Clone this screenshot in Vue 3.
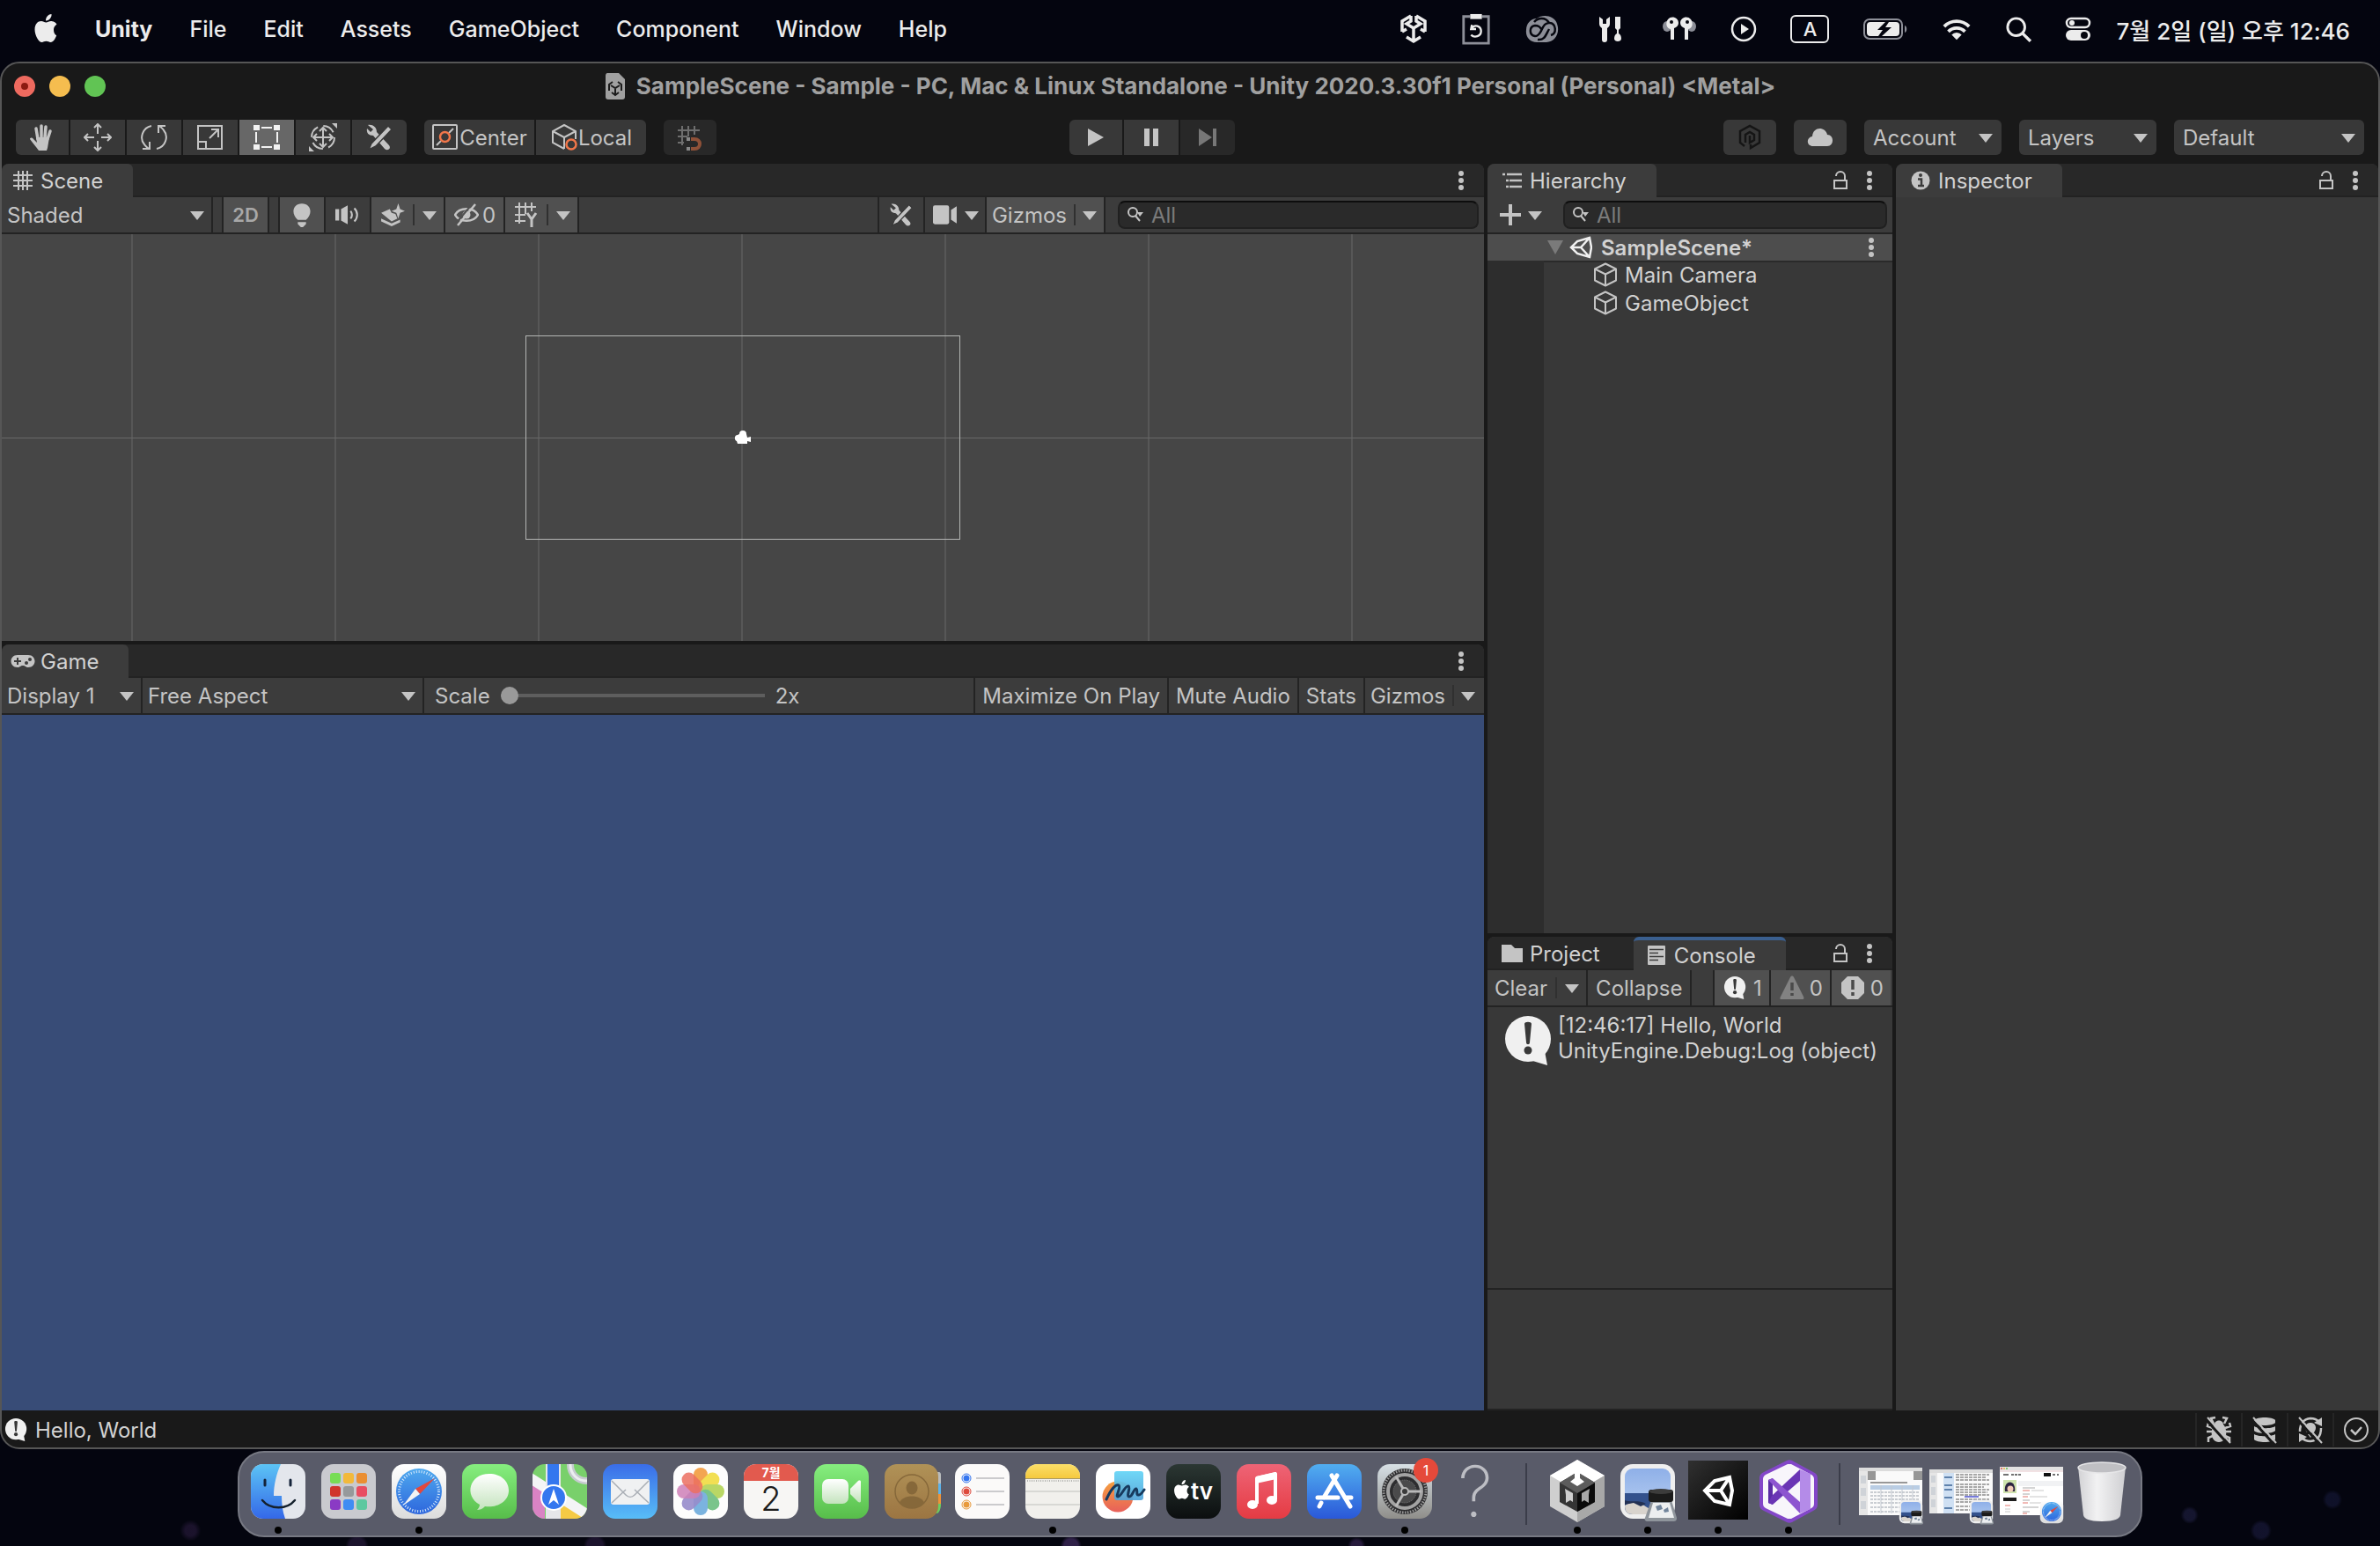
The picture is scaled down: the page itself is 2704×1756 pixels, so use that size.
<template>
  <div class="desktop">
    <!-- Icon sprite -->
    <svg class="sprite" aria-hidden="true">
      <defs>
        <linearGradient id="g-finder" x1="0" y1="0" x2="0" y2="1"><stop offset="0" stop-color="#5cc4f5" /><stop offset="1" stop-color="#3468e8" /></linearGradient>
        <linearGradient id="g-green" x1="0" y1="0" x2="0" y2="1"><stop offset="0" stop-color="#86ee7f" /><stop offset="1" stop-color="#57bd4a" /></linearGradient>
        <linearGradient id="g-mail" x1="0" y1="0" x2="0" y2="1"><stop offset="0" stop-color="#3a6de8" /><stop offset="1" stop-color="#58bdf7" /></linearGradient>
        <linearGradient id="g-store" x1="0" y1="0" x2="0" y2="1"><stop offset="0" stop-color="#51aef0" /><stop offset="1" stop-color="#2a58d8" /></linearGradient>
        <linearGradient id="g-safari" x1="0" y1="0" x2="0" y2="1"><stop offset="0" stop-color="#4fa9ee" /><stop offset="1" stop-color="#2d66dd" /></linearGradient>
        <linearGradient id="g-white" x1="0" y1="0" x2="0" y2="1"><stop offset="0" stop-color="#ffffff" /><stop offset="1" stop-color="#dcdcdc" /></linearGradient>
        <linearGradient id="g-bubble" x1="0" y1="0" x2="0" y2="1"><stop offset="0" stop-color="#ffffff" /><stop offset="1" stop-color="#c4e3bd" /></linearGradient>
        <linearGradient id="g-music" x1="0" y1="0" x2="0" y2="1"><stop offset="0" stop-color="#ee6476" /><stop offset="1" stop-color="#e53b43" /></linearGradient>
        <linearGradient id="g-tv" x1="0" y1="0" x2="0" y2="1"><stop offset="0" stop-color="#2b3733" /><stop offset="1" stop-color="#0b0e0f" /></linearGradient>
        <linearGradient id="g-brown" x1="0" y1="0" x2="0" y2="1"><stop offset="0" stop-color="#b09257" /><stop offset="1" stop-color="#9c7542" /></linearGradient>
        <linearGradient id="g-note" x1="0" y1="0" x2="0" y2="1"><stop offset="0" stop-color="#fbdf69" /><stop offset="1" stop-color="#f5c93e" /></linearGradient>
        <linearGradient id="g-cyan" x1="0" y1="0" x2="0" y2="1"><stop offset="0" stop-color="#63d4f6" /><stop offset="1" stop-color="#4fa3da" /></linearGradient>
        <linearGradient id="g-orange" x1="0" y1="0" x2="0" y2="1"><stop offset="0" stop-color="#f5a03f" /><stop offset="1" stop-color="#e8605a" /></linearGradient>
        <linearGradient id="g-gear" x1="0" y1="0" x2="0" y2="1"><stop offset="0" stop-color="#d7e0e6" /><stop offset="1" stop-color="#8f8e8a" /></linearGradient>
        <linearGradient id="g-trash" x1="0" y1="0" x2="1" y2="0"><stop offset="0" stop-color="#d2d2d5" /><stop offset=".4" stop-color="#f2f2f3" /><stop offset="1" stop-color="#cfcfd2" /></linearGradient>
        <linearGradient id="g-unity" x1="0" y1="0" x2="1" y2="1"><stop offset="0" stop-color="#303030" /><stop offset="1" stop-color="#000000" /></linearGradient>
        <linearGradient id="g-sky" x1="0" y1="0" x2="0" y2="1"><stop offset="0" stop-color="#8fb0e8" /><stop offset="1" stop-color="#b9d0f2" /></linearGradient>
        <clipPath id="c-tile"><rect x="9" y="9" width="62" height="62" rx="14" /></clipPath>
      </defs>

      <!-- Shared glyphs -->
      <symbol id="i-down" viewBox="0 0 16 16"><path d="M0 4h16L8 14z" fill="currentColor" /></symbol>
      <symbol id="i-kebab" viewBox="0 0 6 22"><g fill="currentColor"><circle cx="3" cy="3" r="3" /><circle cx="3" cy="11" r="3" /><circle cx="3" cy="19" r="3" /></g></symbol>
      <symbol id="i-lock" viewBox="0 0 20 22"><path d="M3 11h14v9H3zM5 6a5 5 0 0 1 10 0v5" fill="none" stroke="currentColor" stroke-width="2" /></symbol>
      <symbol id="i-search" viewBox="0 0 20 20"><circle cx="7" cy="7" r="5" fill="none" stroke="currentColor" stroke-width="2" /><path d="M10 11l5 6" stroke="currentColor" stroke-width="2" /><path d="M12 7h7l-4 5z" fill="currentColor" /></symbol>
      <symbol id="i-apple" viewBox="0 0 28 34"><path d="M23 18c0-4 3-6 3.500-6.500C24.500 8.500 21.500 8 20 8c-2.500 0-4 1.500-5.700 1.500S11 8 8.800 8C5 8 1.500 11.300 1.500 17.500 1.500 24 6 32 9.500 32c2 0 2.700-1.200 5-1.200s3 1.200 5 1.200c3 0 5.500-4.500 6.700-7.800C24 23 23 21 23 18zM19 5c1.200-1.500 1.700-3 1.500-5-2 .1-4 1.300-5 2.800-1 1.300-1.600 3-1.500 4.600 2 .2 3.800-.8 5-2.400z" fill="currentColor" /></symbol>

      <!-- Menu bar glyphs -->
      <symbol id="m-cube" viewBox="0 0 32 36"><path d="M13 3L3 9v12M19 3l10 6v12M13 3v6l-5 3 8 5 8-5-5-3V3M16 17v16M3 21l5-3M29 21l-5-3M8 27l8 5 8-5" fill="none" stroke="currentColor" stroke-width="3.500" /></symbol>
      <symbol id="m-clip" viewBox="0 0 34 38"><path d="M10 4H2v32h30V4h-8" fill="none" stroke="#8d8f98" stroke-width="3" /><path d="M10 1h14v6H10z" fill="currentColor" /><path d="M12 14l-1 5h6M12 18c3-5 11-3 11 3.500S15 30 11 26" fill="none" stroke="currentColor" stroke-width="2.500" /></symbol>
      <symbol id="m-cc" viewBox="0 0 40 34"><path d="M14 5C20 0 34 1 37 11c4 11-3 21-12 21H14C6 32 1 26 2 18 2 11 7 5 14 5z" fill="#8d8f98" /><path d="M30 24c7-2 6-13-1-14-6-1-8 5-10 9-2 3-3 6-7 6-7-1-7-11 0-12 4 0 6 2 7 4M11 9c4-5 13-6 17 1M15 29c8 1 9-5 13-12" fill="none" stroke="#06070f" stroke-width="2.500" /></symbol>
      <symbol id="m-tools" viewBox="0 0 32 32"><path d="M3 2v8c0 3 2 4 3 5v13a3 3 0 0 0 6 0V15c1-1 3-2 3-5V2l-4 3v5H7V5z" fill="currentColor" /><path d="M21 2h6v13l-2 2v4c2 1 3 3 3 6 0 4-8 4-8 0 0-3 1-5 3-6v-4l-2-2z" fill="currentColor" /></symbol>
      <symbol id="m-pods" viewBox="0 0 40 30"><ellipse cx="6" cy="12" rx="5" ry="6" fill="#8d8f98" /><ellipse cx="34" cy="12" rx="5" ry="6" fill="#8d8f98" /><path d="M7 4c4-5 12-2 12 4 0 3-2 5-5 6v13h-4V15C5 14 4 8 7 4zM33 4c-4-5-12-2-12 4 0 3 2 5 5 6v13h4V15c5-1 6-7 3-11z" fill="currentColor" /><circle cx="11" cy="7" r="2" fill="#06070f" /><circle cx="29" cy="7" r="2" fill="#06070f" /></symbol>
      <symbol id="m-play" viewBox="0 0 30 30"><circle cx="15" cy="15" r="13" fill="none" stroke="currentColor" stroke-width="2.500" /><path d="M12 9l9 6-9 6z" fill="currentColor" /></symbol>
      <symbol id="m-battery" viewBox="0 0 52 26"><rect x="2" y="2" width="43" height="22" rx="6" fill="none" stroke="#8d8f98" stroke-width="2" /><path d="M48 9c3 1 3 7 0 8z" fill="#8d8f98" /><path d="M9 5h17l-9 9h6l-5 7H9a4 4 0 0 1-4-4V9a4 4 0 0 1 4-4zM30 5h8a4 4 0 0 1 4 4v8a4 4 0 0 1-4 4H22l11-10h-7z" fill="currentColor" /></symbol>
      <symbol id="m-wifi" viewBox="0 0 36 26"><path d="M3 10a21 21 0 0 1 30 0M8 16a14 14 0 0 1 20 0" fill="none" stroke="currentColor" stroke-width="4" /><path d="M12 20a8 8 0 0 1 12 0l-6 6z" fill="currentColor" /></symbol>
      <symbol id="m-search" viewBox="0 0 26 26"><circle cx="11" cy="11" r="8.500" fill="none" stroke="currentColor" stroke-width="2.500" /><path d="M17 17l8 8" stroke="currentColor" stroke-width="3" /></symbol>
      <symbol id="m-control" viewBox="0 0 30 28"><rect x="2" y="2" width="26" height="10" rx="5" fill="none" stroke="currentColor" stroke-width="2.500" /><circle cx="8" cy="7" r="3" fill="currentColor" /><rect x="1" y="15" width="28" height="12" rx="6" fill="currentColor" /><circle cx="22" cy="21" r="4" fill="#06070f" /></symbol>

      <!-- Editor tools -->
      <symbol id="t-hand" viewBox="0 0 32 32"><path d="M11 18L9 6M15 16V3M19 16l1-12M22 18l3-9" stroke="currentColor" stroke-width="3.500" stroke-linecap="round" /><path d="M9 16h15l-2 12-1 3h-9C9 27 5 22 2 18c0-2 3-2 4 0l4 4z" fill="currentColor" /></symbol>
      <symbol id="t-move" viewBox="0 0 32 32"><path d="M16 1v11M16 20v11M1 16h11M20 16h11M12 5l4-4 4 4M12 27l4 4 4-4M5 12l-4 4 4 4M27 12l4 4-4 4" fill="none" stroke="currentColor" stroke-width="2" /></symbol>
      <symbol id="t-rotate" viewBox="0 0 32 32"><path d="M13 3C3 5-1 17 5 24c1 2 3 3 5 5M3 29h8v-8M19 29c10-2 14-14 8-21-1-2-3-3-5-5M29 3h-8v8" fill="none" stroke="currentColor" stroke-width="2" /></symbol>
      <symbol id="t-scale" viewBox="0 0 32 32"><path d="M2 3h27v26H2zM2 21h9v8M15 17L25 7M17 7h8v9" fill="none" stroke="currentColor" stroke-width="2" /></symbol>
      <symbol id="t-rect" viewBox="0 0 32 32"><path d="M10 5h12M10 27h12M4 10v12M28 10v12" stroke="currentColor" stroke-width="2" /><path d="M1 2h7v6H1zM24 2h7v6h-7zM1 24h7v6H1zM24 24h7v6h-7z" fill="currentColor" /></symbol>
      <symbol id="t-transform" viewBox="0 0 32 32"><circle cx="16" cy="16" r="13" fill="none" stroke="currentColor" stroke-width="2" stroke-dasharray="14 6.400" /><path d="M16 6v20M6 16h20M12 9l4-4 4 4M12 23l4 4 4-4M9 12l-4 4 4 4M23 12l4 4-4 4" fill="none" stroke="currentColor" stroke-width="2" /><path d="M26 0h6v6zM0 26v6h6z" fill="currentColor" /></symbol>
      <symbol id="t-wrench" viewBox="0 0 32 32"><path d="M3 2c5-1 10 2 10 8l14 15c3 4-2 7-5 4L9 14C4 14 1 11 2 6l4 4 3-3z" fill="currentColor" /><path d="M26 3l4 4-18 19-8 4 3-7z" fill="currentColor" stroke="#383838" stroke-width="1.500" /></symbol>
      <symbol id="t-center" viewBox="0 0 32 32"><rect x="2" y="2" width="27" height="27" rx="1" fill="none" stroke="currentColor" stroke-width="2" /><path d="M6 25l5-5M20 11l5-5" stroke="currentColor" stroke-width="2" /><circle cx="15.500" cy="15.500" r="5.500" fill="none" stroke="#f0764a" stroke-width="2.500" /></symbol>
      <symbol id="t-local" viewBox="0 0 32 32"><path d="M16 29L3 22V9l13-7 13 7v9M3 9l13 7 13-7M16 16v13" fill="none" stroke="currentColor" stroke-width="2" /><circle cx="24" cy="24" r="5.500" fill="#383838" stroke="#f0764a" stroke-width="2.500" /></symbol>
      <symbol id="t-snap" viewBox="0 0 32 32"><path d="M7 3v22M14 3v12M21 3v10M2 8h25M2 15h11M2 22h7" stroke="#6e6e6e" stroke-width="2" /><path d="M17 18h4c8 0 8 11 0 11h-4" fill="none" stroke="#8f5138" stroke-width="4" /><path d="M12 16h4v4h-4zM12 27h4v4h-4z" fill="#888" /></symbol>
      <symbol id="t-play" viewBox="0 0 32 32"><path d="M7 6l18 10L7 26z" fill="currentColor" /></symbol>
      <symbol id="t-pause" viewBox="0 0 32 32"><path d="M8 6h6v20H8zM18 6h6v20h-6z" fill="currentColor" /></symbol>
      <symbol id="t-step" viewBox="0 0 32 32"><path d="M6 6l15 10L6 26zM22 6h4v20h-4z" fill="currentColor" /></symbol>
      <symbol id="t-plastic" viewBox="0 0 32 32"><path d="M10 26l-5-4V9l11-6 11 6v13l-10 6v-4M11 22v-9l5-3 5 3v6l-5 3v-8" fill="none" stroke="#151515" stroke-width="2.500" /></symbol>
      <symbol id="t-cloud" viewBox="0 0 32 32"><path d="M8 26c-8 0-8-10-1-11C8 3 22 4 24 13c8 0 8 13 0 13z" fill="currentColor" /></symbol>

      <!-- Panel glyphs -->
      <symbol id="p-scene" viewBox="0 0 24 24"><path d="M7 1v22M12 1v22M17 1v22M1 6h22M1 12h22M1 18h22" stroke="currentColor" stroke-width="2" /></symbol>
      <symbol id="p-game" viewBox="0 0 28 24"><path d="M8 5h12c10 0 10 14 0 14-3 0-3-2-6-2s-3 2-6 2C-2 19-2 5 8 5z" fill="currentColor" /><path d="M8 8v8M4 12h8" stroke="#3c3c3c" stroke-width="2" /><circle cx="18" cy="14" r="2" fill="#3c3c3c" /><circle cx="22" cy="10" r="2" fill="#3c3c3c" /></symbol>
      <symbol id="p-hierarchy" viewBox="0 0 24 24"><path d="M6 5h17M9 12h14M9 19h14M1 5h3M5 12h3M5 19h3" stroke="currentColor" stroke-width="2.500" /></symbol>
      <symbol id="p-inspector" viewBox="0 0 24 24"><circle cx="12" cy="12" r="10.500" fill="currentColor" /><path d="M9 10.500h4V17M9 18h7" stroke="#3c3c3c" stroke-width="2.500" fill="none" /><circle cx="12" cy="6" r="2" fill="#3c3c3c" /></symbol>
      <symbol id="p-project" viewBox="0 0 24 24"><path d="M0 2h11l4 4h9v16H0z" fill="currentColor" /></symbol>
      <symbol id="p-console" viewBox="0 0 24 24"><rect x="2" y="1" width="20" height="22" rx="1" fill="currentColor" /><path d="M4 5.500h16M4 9.500h10M4 13.500h16M4 17.500h10" stroke="#3c3c3c" stroke-width="1.500" /></symbol>
      <symbol id="s-bulb" viewBox="0 0 24 24"><path d="M8 17C1 11 3 1 12 1s11 10 4 16zM8 19h8v2l-3 3h-2l-3-3z" fill="currentColor" /></symbol>
      <symbol id="s-audio" viewBox="0 0 26 24"><path d="M0 6h4v12H0zM6 6l7-4v20l-7-4z" fill="currentColor" /><path d="M16 8c2 2 2 6 0 8M20 5c4 4 4 10 0 14" fill="none" stroke="currentColor" stroke-width="2" /></symbol>
      <symbol id="s-fx" viewBox="0 0 26 24"><path d="M19 0l2 6 5 2-5 2-2 6-2-6-5-2 5-2z" fill="currentColor" /><path d="M1 10l9-4 2 4 4 1 2 5-6 3zM1 16l11 5 9-4v3l-9 4-11-5z" fill="currentColor" /></symbol>
      <symbol id="s-eye" viewBox="0 0 28 24"><path d="M1 12c5-9 21-9 26 0-5 9-21 9-26 0z" fill="none" stroke="currentColor" stroke-width="2.500" /><circle cx="14" cy="12" r="4.500" fill="currentColor" /><path d="M21 -1L1 23" stroke="#505050" stroke-width="2" /><path d="M24 0L4 24" stroke="currentColor" stroke-width="2.500" /></symbol>
      <symbol id="s-grid" viewBox="0 0 28 28"><path d="M6 0v24M13 0v13M20 0v10M1 5h24M1 14h12M1 21h12" stroke="currentColor" stroke-width="2" /><path d="M15 12l5 7 5-7M20 19v9" stroke="currentColor" stroke-width="3" fill="none" /></symbol>
      <symbol id="s-camera" viewBox="0 0 26 20"><rect x="0" y="0" width="17" height="20" rx="2" fill="currentColor" /><path d="M19 5l6-4v18l-6-4z" fill="currentColor" /></symbol>
      <symbol id="p-plus" viewBox="0 0 24 24"><path d="M12 0v24M0 12h24" stroke="currentColor" stroke-width="4" /></symbol>
      <symbol id="h-unity" viewBox="0 0 26 26"><path d="M23 2L9 6 2 13l7 7 14 4 2-11zM2 13h11L23 2M13 13l10 11" fill="none" stroke="currentColor" stroke-width="2.500" /></symbol>
      <symbol id="h-cube" viewBox="0 0 28 28"><path d="M14 1.500L26 7.500v13l-12 6-12-6v-13zM2 7.500l12 6 12-6M14 13.500v13" fill="none" stroke="currentColor" stroke-width="2" stroke-linejoin="round" /></symbol>
      <symbol id="l-info" viewBox="0 0 56 60"><circle cx="26" cy="28" r="26" fill="#f0f0f0" /><path d="M45 42l3 16-20-6z" fill="#f0f0f0" /><path d="M22 11c0-3 8-3 8 0l-2 21c0 3-4 3-4 0z" fill="#383838" /><circle cx="26" cy="41" r="4.500" fill="#383838" /></symbol>
      <symbol id="l-warn" viewBox="0 0 28 28"><path d="M12 2c1-2 3-2 4 0l11 22c1 2 0 3-1 3H2c-2 0-2-1-1-3z" fill="#828282" /><path d="M14 8v9M14 20v3" stroke="#4a4a4a" stroke-width="3.500" /></symbol>
      <symbol id="l-error" viewBox="0 0 28 28"><path d="M8 1h12l7 7v12l-7 7H8l-7-7V8z" fill="#c4c4c4" /><path d="M14 5v11M14 19v4" stroke="#4a4a4a" stroke-width="3.500" /></symbol>
      <symbol id="b-bug" viewBox="0 0 30 32"><path d="M9 9l-3-6 5-1M21 9l3-6-5-1M8 14L2 12l1-4M22 14l6-2-1-4M7 18H1M23 18h6M8 23l-5 2v5M22 23l5 2v5" fill="none" stroke="currentColor" stroke-width="2.500" /><path d="M10 10c0-6 10-6 10 0 5 5 5 20-5 20S5 15 10 10z" fill="currentColor" /><path d="M0 4l26 29" stroke="#191919" stroke-width="3" /><path d="M2 2l26 29" stroke="currentColor" stroke-width="2" /></symbol>
      <symbol id="b-cache" viewBox="0 0 30 32"><path d="M3 5c3-4 21-4 24 0v3c-3 4-21 4-24 0zM3 12c4 3 20 3 24 0v5c-3 4-21 4-24 0zM3 21c4 3 20 3 24 0v6c-3 4-21 4-24 0z" fill="currentColor" /><path d="M0 4l26 29" stroke="#191919" stroke-width="3" /><path d="M2 2l26 29" stroke="currentColor" stroke-width="2" /></symbol>
      <symbol id="b-light" viewBox="0 0 30 32"><path d="M3 18C3 10 6 4 15 3c4 0 7 1 10 4M27 14c0 8-3 14-12 15-4 0-7-1-10-4" fill="none" stroke="currentColor" stroke-width="2.500" /><path d="M28 2v10l-9-4zM2 30V20l9 4z" fill="currentColor" /><path d="M11 19c-4-5-2-11 4-11s8 6 4 11zM12 21h6l-3 4z" fill="currentColor" /><path d="M0 4l26 29" stroke="#191919" stroke-width="3" /><path d="M2 2l26 29" stroke="currentColor" stroke-width="2" /></symbol>
      <symbol id="b-ok" viewBox="0 0 30 32"><circle cx="15" cy="16" r="13" fill="none" stroke="currentColor" stroke-width="2" /><path d="M9 16l5 5 7-8" fill="none" stroke="currentColor" stroke-width="2.500" /></symbol>

      <!-- Dock apps -->
      <symbol id="d-finder" viewBox="0 0 80 80">
        <g clip-path="url(#c-tile)"><path d="M9 9h62v62H9z" fill="#e3e6ec" /><path d="M9 9h34c-5 11-8 24-8 36h9c0 9 1 18 4 26H9z" fill="url(#g-finder)" /></g>
        <path d="M25 27v6M54 27v6" stroke="#14233a" stroke-width="3" stroke-linecap="round" /><path d="M22 50c9 11 28 11 37 0" fill="none" stroke="#14202c" stroke-width="2.500" stroke-linecap="round" />
      </symbol>
      <symbol id="d-launchpad" viewBox="0 0 80 80">
        <rect x="9" y="9" width="62" height="62" rx="14" fill="#c9cacf" />
        <rect x="19" y="19" width="12" height="12" rx="3" fill="#77dd55" /><rect x="34" y="19" width="12" height="12" rx="3" fill="#f2b93b" /><rect x="49" y="19" width="12" height="12" rx="3" fill="#ea8f33" />
        <rect x="19" y="34" width="12" height="12" rx="3" fill="#d0362d" /><rect x="34" y="34" width="12" height="12" rx="3" fill="#96999b" /><rect x="49" y="34" width="12" height="12" rx="3" fill="#e84d62" />
        <rect x="19" y="49" width="12" height="12" rx="3" fill="#8a3ac4" /><rect x="34" y="49" width="12" height="12" rx="3" fill="#3f8df3" /><rect x="49" y="49" width="12" height="12" rx="3" fill="#5dc8a0" />
      </symbol>
      <symbol id="d-safari" viewBox="0 0 80 80">
        <rect x="9" y="9" width="62" height="62" rx="14" fill="url(#g-white)" /><circle cx="40" cy="40" r="26" fill="url(#g-safari)" />
        <circle cx="40" cy="40" r="22.500" fill="none" stroke="#d6e9fb" stroke-width="3" stroke-dasharray="1 2" />
        <path d="M58 25L36 37l5 6z" fill="#e2483d" /><path d="M22 56l14-19 5 6z" fill="#f3f3f3" />
      </symbol>
      <symbol id="d-messages" viewBox="0 0 80 80">
        <rect x="9" y="9" width="62" height="62" rx="14" fill="url(#g-green)" /><path d="M40 20c13 0 22 8 22 19 0 13-14 20-27 18-3 3-6 4-9 4 2-2 3-4 3-6C11 45 17 20 40 20z" fill="url(#g-bubble)" />
      </symbol>
      <symbol id="d-maps" viewBox="0 0 80 80">
        <g clip-path="url(#c-tile)"><path d="M9 9h62v62H9z" fill="#79d06b" /><path d="M9 30v41h14V38z" fill="#d983c4" /><path d="M36 71h35L42 40z" fill="#f5ca45" /><path d="M5 17l72 46v14L5 31z" fill="#f4f4f6" /><path d="M24 9h17v62H24z" fill="#e6e6ea" /><path d="M26 9h13v31H26z" fill="#3477ef" /><circle cx="70" cy="10" r="18" fill="none" stroke="#c6cacf" stroke-width="8" /><circle cx="70" cy="10" r="18" fill="none" stroke="#eceef0" stroke-width="3" /></g>
        <circle cx="33" cy="47" r="15" fill="#fff" /><circle cx="33" cy="47" r="13" fill="#3477ef" /><path d="M33 37l6 18-6-5-6 5z" fill="#fff" />
      </symbol>
      <symbol id="d-mail" viewBox="0 0 80 80">
        <rect x="9" y="9" width="62" height="62" rx="14" fill="url(#g-mail)" /><rect x="18" y="26" width="44" height="29" rx="3" fill="#f0f1f2" />
        <path d="M19 53l16-15M61 53L45 38M19 28l16 16c3 3 7 3 10 0l16-16" fill="none" stroke="#a9aeb5" stroke-width="1.500" />
      </symbol>
      <symbol id="d-photos" viewBox="0 0 80 80">
        <rect x="9" y="9" width="62" height="62" rx="14" fill="#fdfdfd" />
        <g opacity=".88">
          <rect x="32" y="13" width="16" height="27" rx="8" fill="#f2993a" /><rect x="32" y="13" width="16" height="27" rx="8" fill="#f1dc3c" transform="rotate(45 40 40)" /><rect x="32" y="13" width="16" height="27" rx="8" fill="#b0d251" transform="rotate(90 40 40)" /><rect x="32" y="13" width="16" height="27" rx="8" fill="#68bd7c" transform="rotate(135 40 40)" />
          <rect x="32" y="13" width="16" height="27" rx="8" fill="#6aa9dc" transform="rotate(180 40 40)" /><rect x="32" y="13" width="16" height="27" rx="8" fill="#8a7dc4" transform="rotate(225 40 40)" opacity=".9" /><rect x="32" y="13" width="16" height="27" rx="8" fill="#c86fae" transform="rotate(270 40 40)" opacity=".85" /><rect x="32" y="13" width="16" height="27" rx="8" fill="#ea5c4b" transform="rotate(315 40 40)" opacity=".85" />
        </g>
      </symbol>
      <symbol id="d-calendar" viewBox="0 0 80 80"><g clip-path="url(#c-tile)"><path d="M9 9h62v62H9z" fill="#f7f6f4" /><path d="M9 9h62v19H9z" fill="#e25a4e" /></g></symbol>
      <symbol id="d-facetime" viewBox="0 0 80 80">
        <rect x="9" y="9" width="62" height="62" rx="14" fill="url(#g-green)" /><rect x="18" y="26" width="30" height="28" rx="7" fill="url(#g-bubble)" /><path d="M50 37l9-9c2-1 3 0 3 1v22c0 1-1 2-3 1l-9-9z" fill="url(#g-bubble)" />
      </symbol>
      <symbol id="d-contacts" viewBox="0 0 80 80">
        <path d="M60 18h10c3 0 3 2 3 4v10H60z" fill="#b9bcbe" /><path d="M60 31h13v12H60z" fill="#5cb3ea" /><path d="M60 43h13v11H60z" fill="#ef9338" /><path d="M60 54h13c0 6-2 11-5 11h-8z" fill="#6bcf62" />
        <rect x="9" y="9" width="61" height="62" rx="14" fill="url(#g-brown)" /><circle cx="40" cy="40" r="19" fill="none" stroke="#86683a" stroke-width="1.500" /><ellipse cx="40" cy="36" rx="6.500" ry="7.500" fill="#86683a" /><path d="M26 53c3-10 25-10 28 0-7 8-21 8-28 0z" fill="#86683a" />
      </symbol>
      <symbol id="d-reminders" viewBox="0 0 80 80">
        <rect x="9" y="9" width="62" height="62" rx="14" fill="#fbfaf9" /><path d="M33 25h32M33 40h32M33 55h32" stroke="#bcbcbe" stroke-width="1.500" />
        <circle cx="22" cy="25" r="3.500" fill="#3576f0" /><circle cx="22" cy="25" r="5" fill="none" stroke="#3576f0" /><circle cx="22" cy="40" r="3.500" fill="#de4a3c" /><circle cx="22" cy="40" r="5" fill="none" stroke="#de4a3c" /><circle cx="22" cy="55" r="3.500" fill="#e89a3c" /><circle cx="22" cy="55" r="5" fill="none" stroke="#e89a3c" />
      </symbol>
      <symbol id="d-notes" viewBox="0 0 80 80">
        <g clip-path="url(#c-tile)"><path d="M9 9h62v62H9z" fill="#f1f0ec" /><path d="M9 9h62v16H9z" fill="url(#g-note)" /></g><path d="M9 25.500h62" stroke="#a99a63" /><path d="M11 28h60" stroke="#b5b5b2" stroke-width="2" stroke-dasharray="1 1.500" /><path d="M9 40h62M9 55h62" stroke="#d0cfcc" stroke-width="1.500" />
      </symbol>
      <symbol id="d-freeform" viewBox="0 0 80 80">
        <rect x="9" y="9" width="62" height="62" rx="14" fill="#fff" /><circle cx="34" cy="46" r="17.500" fill="url(#g-orange)" /><rect x="30" y="17" width="33" height="33" rx="3" fill="url(#g-cyan)" opacity=".92" />
        <path d="M21 49c6-13 11-17 14-16 3 2-4 13-1 13 4 0 8-13 12-12 3 1-3 12 1 12s5-10 8-9c2 1-1 8 3 7 2 0 4-3 6-6" fill="none" stroke="#173a5e" stroke-width="3" stroke-linecap="round" />
      </symbol>
      <symbol id="d-tv" viewBox="0 0 80 80"><rect x="9" y="9" width="62" height="62" rx="14" fill="url(#g-tv)" /><use href="#i-apple" x="17" y="27" width="19" height="23" color="#fff" /></symbol>
      <symbol id="d-music" viewBox="0 0 80 80">
        <rect x="9" y="9" width="62" height="62" rx="14" fill="url(#g-music)" /><path d="M32 54V25l21-5v29" fill="none" stroke="#fff" stroke-width="4" stroke-linejoin="round" /><path d="M31 23l23-5v8l-23 5z" fill="#fff" /><ellipse cx="27" cy="55" rx="6" ry="5" fill="#fff" /><ellipse cx="49" cy="50" rx="6" ry="5" fill="#fff" />
      </symbol>
      <symbol id="d-store" viewBox="0 0 80 80">
        <rect x="9" y="9" width="62" height="62" rx="14" fill="url(#g-store)" /><path d="M43 22L28 47M37 22l21 35M21 47h23M52 47h7M25 53l-2 4" stroke="#fff" stroke-width="5" stroke-linecap="round" />
      </symbol>
      <symbol id="d-settings" viewBox="0 0 80 80">
        <rect x="9" y="9" width="62" height="62" rx="14" fill="url(#g-gear)" /><circle cx="40" cy="40" r="26" fill="#2d2d2f" /><circle cx="40" cy="40" r="24" fill="none" stroke="#9a9a9a" stroke-width="3" stroke-dasharray="1.500 1.500" /><circle cx="40" cy="40" r="19" fill="none" stroke="#a3a3a3" stroke-width="4" /><circle cx="40" cy="40" r="13" fill="#4a4a4b" stroke="#777" stroke-dasharray="1 1" />
        <path d="M40 40h19M40 40l-10-17M40 40L30 57" stroke="#b9b9b9" stroke-width="3" /><circle cx="40" cy="40" r="4" fill="#3a3a3a" stroke="#b9b9b9" stroke-width="2" />
      </symbol>
      <symbol id="d-hub" viewBox="0 0 80 80">
        <path d="M40 4l31 18v35L40 75 9 57V22z" fill="#cfcfcf" /><path d="M40 4l31 18-31 18L9 22z" fill="#fff" /><path d="M40 40l31-18v35L40 75z" fill="#a8a8a8" />
        <path d="M40 18l20 12v22L40 63 20 52V30z" fill="#353535" /><path d="M40 42l20-12v22L40 63z" fill="#0b0b0b" /><path d="M40 18l20 12-20 12-20-12z" fill="#5c5c5c" />
        <path d="M37 25v-7h6v7l5 4-8 5-8-5z" fill="#fff" /><path d="M26 37l9 5v10l-3-2-5 3V44z" fill="#cfcfcf" /><path d="M54 37l-9 5v10l3-2 5 3V44z" fill="#a8a8a8" />
      </symbol>
      <symbol id="d-preview" viewBox="0 0 80 80">
        <rect x="9" y="9" width="62" height="62" rx="14" fill="#efefef" /><rect x="14" y="14" width="52" height="52" rx="9" fill="url(#g-sky)" /><path d="M14 42h52v15c0 6-3 9-9 9H23c-6 0-9-3-9-9z" fill="#33518c" /><path d="M14 56c8-5 16-4 22 0s12 6 12 10H23c-6 0-9-3-9-10z" fill="#d8d3cd" /><path d="M14 50c7 3 16-1 24 4l-6 3-8-4-10 2z" fill="#223053" />
        <path d="M44 50h23l6 20c0 3-1 4-4 4H40c-3 0-4-2-3-4z" fill="#8f959c" /><path d="M46 53h19l5 17H41z" fill="#eceef0" /><path d="M49 57l6-2 2 5-6 2zM58 61l5-3 1 5-5 1z" fill="#71849b" /><rect x="41" y="38" width="28" height="14" rx="3" fill="#1b1b1b" /><ellipse cx="55" cy="40" rx="13" ry="3" fill="#3c3c3c" />
      </symbol>
      <symbol id="d-unity" viewBox="0 0 80 80"><path d="M6 5h68v67H6z" fill="url(#g-unity)" /><path d="M53 24L36 28l-11 11 11 12 17 4 3-16zM25 39h18l10-15M43 39l10 16" fill="none" stroke="#fff" stroke-width="4" /></symbol>
      <symbol id="d-vs" viewBox="0 0 80 80">
        <path d="M38 5c2-1 4-1 6 0l24 13c4 2 5 4 5 8v28c0 4-1 6-5 8L44 75c-2 1-4 1-6 0L12 62c-4-2-5-4-5-8V26c0-4 1-6 5-8z" fill="#8347c8" /><path d="M39 9h4l23 12c2 1 3 3 3 5v28c0 2-1 4-3 5L43 71h-4L14 59c-2-1-3-3-3-5V26c0-2 1-4 3-5z" fill="#f8f6fb" />
        <path d="M17 27l5-2v30l-5-2z" fill="#5a2ca5" /><path d="M17 53l5 2 31-27V15L21 45z" fill="#6a35b5" /><path d="M53 15l12 5v40l-12 5z" fill="#b48be8" /><path d="M17 27l5-2 31 27v13z" fill="#8d55d0" />
      </symbol>
      <symbol id="d-badge-preview" viewBox="0 0 80 80"><use href="#d-preview" x="46" y="46" width="34" height="34" /></symbol>
      <symbol id="d-sheet" viewBox="0 0 80 80">
        <path d="M4 13h72v54H4z" fill="#fafafa" /><path d="M4 13h72v4H4z" fill="#dcdcdc" /><path d="M4 17h10v50H4z" fill="#e6e6e6" /><path d="M14 17h9v10h-9zM66 17h10v10H66z" fill="#979797" /><path d="M6 22h6v9H6zM6 36h6v9H6zM6 51h6v9H6z" fill="#cfd3d8" />
        <path d="M17 30h42" stroke="#777" stroke-width="1.500" /><path d="M17 33h56v5H17z" fill="#b9cde4" /><path d="M17 41h56M17 45h56M17 49h56M17 53h56M17 58h50M17 63h50" stroke="#98a0aa" stroke-dasharray="3 1" /><path d="M29 33v32M41 33v32M53 33v32M65 33v32" stroke="#c2c8d0" />
        <use href="#d-badge-preview" width="80" height="80" />
      </symbol>
      <symbol id="d-doc" viewBox="0 0 80 80">
        <path d="M4 15h72v50H4z" fill="#fafafa" /><path d="M4 15h72v4H4z" fill="#dcdcdc" /><path d="M4 19h9v46H4z" fill="#e6e6e6" /><path d="M20 19h12v46H20z" fill="#cfe0f3" /><path d="M6 22h5v8H6zM6 35h5v9H6zM6 49h5v9H6z" fill="#cfd3d8" /><path d="M21 24h9M21 33h9M21 38h9M21 47h9M21 59h9" stroke="#5f82ac" stroke-width="2" />
        <path d="M34 21h38M34 24h34M34 27h38M34 32h38M34 35h32M34 38h38M34 41h36M34 44h38M34 49h38M34 52h30M34 57h22M34 61h22" stroke="#8d8d8d" stroke-width="1.500" stroke-dasharray="4 1" /><path d="M44 46h16" stroke="#4a4fd0" stroke-width="1.500" />
        <use href="#d-badge-preview" width="80" height="80" />
      </symbol>
      <symbol id="d-web" viewBox="0 0 80 80">
        <path d="M4 12h72v55H4z" fill="#fff" /><path d="M4 12h72v4H4z" fill="#e2e2e2" /><path d="M4 16h72v2H4z" fill="#f2e2e4" /><circle cx="6" cy="14" r="1" fill="#e2574c" /><circle cx="9" cy="14" r="1" fill="#f0b83c" /><circle cx="12" cy="14" r="1" fill="#5fbf4c" />
        <path d="M8 21h6M17 21h3M21 21h3M25 21h3M64 21h3M69 21h2" stroke="#444" stroke-width="1.500" /><path d="M54 19h8v4h-8z" fill="#111" /><path d="M25 28h51v6H25z" fill="#f1f2f4" /><path d="M8 27h15v15H8z" fill="#cfe3ae" /><path d="M10 40c-2-14 13-14 11 0z" fill="#2c2340" /><circle cx="16" cy="37" r="3.500" fill="#f2cdb8" /><path d="M8 47h15v4H8z" fill="#1d1d1d" />
        <path d="M30 36h14M30 43h8M30 50h8M30 58h18M30 63h8" stroke="#aaa" /><path d="M30 39h8M30 46h6M30 53h6M10 56h6M30 65h5" stroke="#e2746c" /><path d="M40 39h14M38 46h20M38 53h18M10 60h6M10 63h6" stroke="#c8c8c8" />
        <use href="#d-safari" x="46" y="46" width="34" height="34" />
      </symbol>
      <symbol id="d-trash" viewBox="0 0 80 80"><path d="M13 12h54l-6 55c-1 4-6 7-21 7s-20-3-21-7z" fill="url(#g-trash)" /><ellipse cx="40" cy="13" rx="27" ry="6" fill="#bfbfc3" stroke="#e6e6e8" stroke-width="1.500" /></symbol>
    </svg>

    <header class="menubar">
      <nav class="menus">
        <button class="apple" aria-label="Apple"><svg class="apple-icon"><use href="#i-apple" /></svg></button>
        <button v-for="menu in menus" :key="menu" :class="{ strong: menu === 'Unity' }">{{ menu }}</button>
      </nav>
      <div class="status-items">
        <svg v-for="item in statusLeft" :key="item" class="status-icon" :class="item"><use :href="'#' + item" /></svg>
        <span class="input-source">A</span>
        <svg v-for="item in statusRight" :key="item" class="status-icon" :class="item"><use :href="'#' + item" /></svg>
        <time class="clock">7월 2일 (일) 오후 12:46</time>
      </div>
    </header>

    <main class="window">
      <div class="titlebar">
        <div class="lights">
          <button class="light red" aria-label="Close"></button>
          <button class="light yellow" aria-label="Minimize"></button>
          <button class="light green" aria-label="Zoom"></button>
        </div>
        <h1 class="title">
          <svg class="doc-icon" viewBox="0 0 24 32"><path d="M3 1h13l7 7v20c0 2-1 3-3 3H4c-2 0-3-1-3-3V4c0-2 1-3 2-3z" fill="#a0a0a0" /><path d="M9 11l-4 3v7M15 11l4 3v7M7 15l5 3 5-3M12 18v8M8 23l4 3 4-3" fill="none" stroke="#1b1b1b" stroke-width="2" /></svg>
          SampleScene - Sample - PC, Mac &amp; Linux Standalone - Unity 2020.3.30f1 Personal (Personal) &lt;Metal&gt;
        </h1>
      </div>

      <div class="editor-bar">
        <div class="bar-side">
          <div class="group">
            <button
              v-for="tool in tools"
              :key="tool.icon"
              class="tool"
              :class="{ active: activeTool === tool.icon }"
              :aria-label="tool.label"
              @click="activeTool = tool.icon"
            >
              <svg class="icon"><use :href="'#' + tool.icon" /></svg>
            </button>
          </div>
          <div class="group">
            <button class="tool wide"><svg class="icon"><use href="#t-center" /></svg>Center</button>
            <button class="tool wide"><svg class="icon"><use href="#t-local" /></svg>Local</button>
          </div>
          <button class="tool disabled" aria-label="Grid snapping" disabled><svg class="icon"><use href="#t-snap" /></svg></button>
        </div>
        <div class="group">
          <button class="tool" aria-label="Play"><svg class="icon"><use href="#t-play" /></svg></button>
          <button class="tool" aria-label="Pause"><svg class="icon"><use href="#t-pause" /></svg></button>
          <button class="tool disabled" aria-label="Step" disabled><svg class="icon"><use href="#t-step" /></svg></button>
        </div>
        <div class="bar-side end">
          <button class="tool" aria-label="Plastic SCM"><svg class="icon"><use href="#t-plastic" /></svg></button>
          <button class="tool" aria-label="Cloud"><svg class="icon"><use href="#t-cloud" /></svg></button>
          <span v-for="drop in dropdowns" :key="drop" class="drop boxed" :class="{ long: drop === 'Default' }">
            <select :aria-label="drop"><option>{{ drop }}</option></select>
            <svg class="down"><use href="#i-down" /></svg>
          </span>
        </div>
      </div>

      <div class="panels">
        <div class="column">
          <section class="panel scene-panel">
            <div class="tabs">
              <button class="tab current scene-tab"><svg class="tab-icon"><use href="#p-scene" /></svg>Scene</button>
              <button class="plain tab-menu" aria-label="Scene menu"><svg class="kebab"><use href="#i-kebab" /></svg></button>
            </div>
            <div class="toolbar">
              <span class="drop cell shading">
                <select aria-label="Draw mode"><option>Shaded</option></select>
                <svg class="down"><use href="#i-down" /></svg>
              </span>
              <span class="cell spacer"></span>
              <button class="cell toggle on two-d">2D</button>
              <span class="cell spacer"></span>
              <button class="cell toggle on" aria-label="Lighting"><svg class="glyph"><use href="#s-bulb" /></svg></button>
              <button class="cell toggle" aria-label="Audio"><svg class="glyph"><use href="#s-audio" /></svg></button>
              <button class="cell split on" aria-label="Effects"><svg class="glyph"><use href="#s-fx" /></svg><i class="bar"></i><svg class="down"><use href="#i-down" /></svg></button>
              <button class="cell hidden-count on"><svg class="glyph"><use href="#s-eye" /></svg>0</button>
              <button class="cell split on" aria-label="Grid"><svg class="glyph"><use href="#s-grid" /></svg><i class="bar"></i><svg class="down"><use href="#i-down" /></svg></button>
              <span class="cell fill"></span>
              <button class="cell toggle" aria-label="Component tools"><svg class="glyph"><use href="#t-wrench" /></svg></button>
              <button class="cell camera" aria-label="Camera"><svg class="glyph"><use href="#s-camera" /></svg><svg class="down"><use href="#i-down" /></svg></button>
              <button class="cell gizmos on">Gizmos<i class="bar"></i><svg class="down"><use href="#i-down" /></svg></button>
              <label class="search scene-search"><svg class="search-icon"><use href="#i-search" /></svg><input type="text" placeholder="All" aria-label="Search scene" /></label>
            </div>
            <div class="scene-view">
              <div class="camera-frame"></div>
              <svg class="camera-gizmo" viewBox="0 0 20 16"><path d="M6 4a4 4 0 0 1 8 0l1 4 4-1v6l-4-1v3H4l-1-3C0 11 0 5 4 5z" fill="#fff" /></svg>
            </div>
          </section>

          <section class="panel game-panel">
            <div class="tabs">
              <button class="tab current game-tab"><svg class="tab-icon wide-icon"><use href="#p-game" /></svg>Game</button>
              <button class="plain tab-menu" aria-label="Game menu"><svg class="kebab"><use href="#i-kebab" /></svg></button>
            </div>
            <div class="toolbar">
              <span class="drop cell display">
                <select aria-label="Display"><option>Display 1</option></select>
                <svg class="down"><use href="#i-down" /></svg>
              </span>
              <span class="drop cell aspect">
                <select aria-label="Aspect"><option>Free Aspect</option></select>
                <svg class="down"><use href="#i-down" /></svg>
              </span>
              <div class="cell fill scale">
                <label for="scale">Scale</label>
                <input id="scale" v-model="scale" type="range" min="2" max="10" />
                <output for="scale">{{ scale }}x</output>
              </div>
              <button class="cell text">Maximize On Play</button>
              <button class="cell text">Mute Audio</button>
              <button class="cell text">Stats</button>
              <button class="cell gizmos last">Gizmos<i class="bar"></i><svg class="down"><use href="#i-down" /></svg></button>
            </div>
            <div class="game-view"></div>
          </section>
        </div>

        <div class="column">
          <section class="panel hierarchy-panel">
            <div class="tabs">
              <button class="tab current hierarchy-tab"><svg class="tab-icon"><use href="#p-hierarchy" /></svg>Hierarchy</button>
              <button class="plain" aria-label="Lock hierarchy"><svg class="lock"><use href="#i-lock" /></svg></button>
              <button class="plain tab-menu" aria-label="Hierarchy menu"><svg class="kebab"><use href="#i-kebab" /></svg></button>
            </div>
            <div class="toolbar">
              <button class="create" aria-label="Create"><svg class="plus"><use href="#p-plus" /></svg><svg class="down"><use href="#i-down" /></svg></button>
              <label class="search"><svg class="search-icon"><use href="#i-search" /></svg><input type="text" placeholder="All" aria-label="Search hierarchy" /></label>
            </div>
            <div class="scene-row">
              <svg class="fold" viewBox="0 0 18 16"><path d="M0 0h18L9 16z" fill="#7a7a7a" /></svg>
              <svg class="unity-icon"><use href="#h-unity" /></svg>
              <strong>SampleScene*</strong>
              <button class="plain" aria-label="Scene options"><svg class="kebab"><use href="#i-kebab" /></svg></button>
            </div>
            <ul class="objects">
              <li v-for="object in objects" :key="object"><svg class="cube"><use href="#h-cube" /></svg>{{ object }}</li>
            </ul>
          </section>

          <section class="panel console-panel">
            <div class="tabs">
              <button class="tab project-tab"><svg class="tab-icon"><use href="#p-project" /></svg>Project</button>
              <button class="tab current focused console-tab"><svg class="tab-icon"><use href="#p-console" /></svg>Console</button>
              <button class="plain" aria-label="Lock console"><svg class="lock"><use href="#i-lock" /></svg></button>
              <button class="plain tab-menu" aria-label="Console menu"><svg class="kebab"><use href="#i-kebab" /></svg></button>
            </div>
            <div class="toolbar console-bar">
              <button class="cell clear">Clear<i class="bar"></i><svg class="down"><use href="#i-down" /></svg></button>
              <button class="cell text">Collapse</button>
              <span class="cell fill"></span>
              <button v-for="count in counts" :key="count.icon" class="cell count on" :aria-label="count.label">
                <svg class="count-icon"><use :href="'#' + count.icon" /></svg>{{ count.value }}
              </button>
            </div>
            <div class="log">
              <svg class="log-icon"><use href="#l-info" /></svg>
              <p>[12:46:17] Hello, World<br />UnityEngine.Debug:Log (object)</p>
            </div>
            <div class="log-detail"></div>
          </section>
        </div>

        <section class="panel inspector-panel">
          <div class="tabs">
            <button class="tab current inspector-tab"><svg class="tab-icon"><use href="#p-inspector" /></svg>Inspector</button>
            <button class="plain" aria-label="Lock inspector"><svg class="lock"><use href="#i-lock" /></svg></button>
            <button class="plain tab-menu" aria-label="Inspector menu"><svg class="kebab"><use href="#i-kebab" /></svg></button>
          </div>
        </section>
      </div>

      <footer class="statusbar">
        <svg class="count-icon"><use href="#l-info" /></svg>
        <span class="message">Hello, World</span>
        <button v-for="item in statusButtons" :key="item.icon" :aria-label="item.label"><svg class="icon"><use :href="'#' + item.icon" /></svg></button>
      </footer>
    </main>

    <nav class="dock">
      <template v-for="(group, index) in dock" :key="index">
        <span v-if="index" class="dock-divider"></span>
        <button v-for="app in group" :key="app.id" class="dock-item" :class="{ running: app.running }" :aria-label="app.id">
          <svg v-if="app.id !== 'unknown'" class="dock-icon"><use :href="'#d-' + app.id" /></svg>
          <span v-for="label in app.labels" :key="label.text" class="app-label" :class="label.kind">{{ label.text }}</span>
          <span v-if="app.badge" class="badge">{{ app.badge }}</span>
        </button>
      </template>
    </nav>
  </div>
</template>

<script setup>
import { ref } from 'vue';

const menus = ['Unity', 'File', 'Edit', 'Assets', 'GameObject', 'Component', 'Window', 'Help'];
const statusLeft = ['m-cube', 'm-clip', 'm-cc', 'm-tools', 'm-pods', 'm-play'];
const statusRight = ['m-battery', 'm-wifi', 'm-search', 'm-control'];
const dropdowns = ['Account', 'Layers', 'Default'];
const objects = ['Main Camera', 'GameObject'];

const tools = [
  { icon: 't-hand', label: 'Hand' },
  { icon: 't-move', label: 'Move' },
  { icon: 't-rotate', label: 'Rotate' },
  { icon: 't-scale', label: 'Scale' },
  { icon: 't-rect', label: 'Rect' },
  { icon: 't-transform', label: 'Transform' },
  { icon: 't-wrench', label: 'Custom' }
];

const counts = [
  { icon: 'l-info', label: 'Messages', value: 1 },
  { icon: 'l-warn', label: 'Warnings', value: 0 },
  { icon: 'l-error', label: 'Errors', value: 0 }
];

const statusButtons = [
  { icon: 'b-bug', label: 'Debugger' },
  { icon: 'b-cache', label: 'Cache server' },
  { icon: 'b-light', label: 'Auto lighting' },
  { icon: 'b-ok', label: 'Progress' }
];

const dock = [
  [
    { id: 'finder', running: true },
    { id: 'launchpad' },
    { id: 'safari', running: true },
    { id: 'messages' },
    { id: 'maps' },
    { id: 'mail' },
    { id: 'photos' },
    { id: 'calendar', labels: [{ kind: 'month', text: '7월' }, { kind: 'day', text: '2' }] },
    { id: 'facetime' },
    { id: 'contacts' },
    { id: 'reminders' },
    { id: 'notes', running: true },
    { id: 'freeform' },
    { id: 'tv', labels: [{ kind: 'tv-name', text: 'tv' }] },
    { id: 'music' },
    { id: 'store' },
    { id: 'settings', running: true, badge: 1 },
    { id: 'unknown', labels: [{ kind: 'question', text: '?' }] }
  ],
  [
    { id: 'hub', running: true },
    { id: 'preview', running: true },
    { id: 'unity', running: true },
    { id: 'vs', running: true }
  ],
  [{ id: 'sheet' }, { id: 'doc' }, { id: 'web' }, { id: 'trash' }]
];

const activeTool = ref('t-rect');
const scale = ref(2);
</script>

<style>
body {
  margin: 0;
  background: #04050f;
}
</style>

<style scoped>
.desktop {
  display: flex;
  flex-direction: column;
  min-height: 100vh;
  font-family: Inter, "Noto Sans CJK KR", sans-serif;
  font-size: 24px;
  color: #d2d2d2;
  background:
    radial-gradient(circle at 8% 99%, rgba(80, 50, 110, 0.3) 0 6px, transparent 12px),
    radial-gradient(circle at 15% 100%, rgba(70, 45, 100, 0.35) 0 9px, transparent 13px),
    radial-gradient(circle at 25% 100%, rgba(70, 45, 100, 0.35) 0 9px, transparent 13px),
    radial-gradient(circle at 45% 100%, rgba(90, 60, 130, 0.5) 0 8px, transparent 12px),
    radial-gradient(circle at 57% 100%, rgba(90, 60, 130, 0.4) 0 6px, transparent 10px),
    radial-gradient(circle at 92% 98%, rgba(60, 60, 120, 0.3) 0 6px, transparent 10px),
    radial-gradient(circle at 95% 99%, rgba(50, 50, 110, 0.3) 0 8px, transparent 12px),
    radial-gradient(circle at 98% 97%, rgba(40, 45, 100, 0.3) 0 7px, transparent 11px),
    #04050f;
}

.sprite {
  position: absolute;
  width: 0;
  height: 0;
}

svg {
  display: block;
  flex: none;
}

button,
input,
select {
  font: inherit;
  color: inherit;
  margin: 0;
  padding: 0;
  border: 0;
  border-radius: 0;
  background: none;
}

button {
  display: flex;
  align-items: center;
  white-space: nowrap;
}

/* Menu bar */
.menubar {
  display: flex;
  justify-content: space-between;
  height: 66px;
  padding: 0 34px 4px 38px;
  font-size: 25px;
  font-weight: 500;
  color: #ececec;
}

.menus,
.status-items {
  display: flex;
  align-items: center;
  gap: 42px;
}

.strong {
  font-weight: 700;
}

.apple-icon {
  width: 28px;
  height: 34px;
}

.status-items {
  gap: 38px;
}

.status-icon {
  width: 32px;
  height: 36px;
}

.m-clip,
.m-wifi {
  width: 34px;
}

.m-cc,
.m-tools,
.m-pods {
  width: 40px;
}

.m-tools {
  height: 32px;
}

.m-play,
.m-search,
.m-control {
  width: 30px;
}

.m-battery {
  width: 52px;
}

.input-source {
  box-sizing: border-box;
  width: 44px;
  height: 32px;
  border: 2px solid #ececec;
  border-radius: 6px;
  font-size: 22px;
  line-height: 28px;
  text-align: center;
}

.clock {
  margin-left: -10px;
  font-size: 26px;
}

/* Window chrome */
.window {
  display: flex;
  flex: 1;
  flex-direction: column;
  overflow: hidden;
  border: 2px solid #565656;
  border-radius: 22px;
  background: #191919;
}

.titlebar {
  display: grid;
  grid-template-columns: 1fr auto 1fr;
  align-items: center;
  height: 52px;
  padding: 0 14px;
}

.lights {
  display: flex;
  gap: 16px;
}

.light {
  width: 24px;
  height: 24px;
  border-radius: 50%;
  background: #ee6a5f;
}

.light.red {
  border: 8px solid #ee6a5f;
  background: #8c1a10;
}

.light.yellow {
  background: #f5bd4f;
}

.light.green {
  background: #61c454;
}

.title {
  display: flex;
  align-items: center;
  gap: 12px;
  margin: 0;
  font-size: 26px;
  font-weight: 700;
  line-height: 32px;
  color: #a0a0a0;
}

.doc-icon {
  width: 24px;
  height: 32px;
}

/* Editor toolbar */
.editor-bar {
  display: grid;
  grid-template-columns: 1196fr auto 1282fr;
  align-items: center;
  padding: 12px 16px 10px;
  color: #c4c4c4;
}

.bar-side {
  display: flex;
  align-items: center;
  gap: 20px;
}

.bar-side.end {
  justify-content: flex-end;
}

.group {
  display: flex;
  gap: 2px;
  overflow: hidden;
  border-radius: 6px;
}

.tool {
  justify-content: center;
  width: 62px;
  height: 40px;
  background: #383838;
}

.tool:first-child,
.bar-side > .tool {
  width: 60px;
}

.bar-side > .tool {
  border-radius: 6px;
}

.group .tool.active {
  background: #676767;
  color: #f2f2f2;
}

.group .tool.wide {
  width: 125px;
}

.tool.disabled {
  background: #282828;
  color: #777;
}

.icon {
  width: 32px;
  height: 32px;
}

.drop {
  display: grid;
  align-items: center;
}

.drop > * {
  grid-area: 1 / 1;
}

.drop select {
  width: 100%;
  height: 40px;
  padding: 0 6px;
  appearance: none;
}

.down {
  width: 16px;
  height: 16px;
  color: #c4c4c4;
  pointer-events: none;
}

.drop .down {
  justify-self: end;
  margin-right: 8px;
}

.boxed {
  width: 156px;
  border-radius: 6px;
  background: #383838;
}

.boxed.long {
  width: 216px;
}

.boxed select {
  padding: 0 10px;
}

.boxed .down {
  margin-right: 10px;
}

/* Panels */
.panels {
  display: grid;
  flex: 1;
  grid-template-columns: 1684fr 460fr 548fr;
  gap: 4px;
}

.column {
  display: flex;
  flex-direction: column;
  gap: 4px;
  min-width: 0;
}

.panel {
  display: flex;
  flex-direction: column;
  overflow: hidden;
  border-radius: 8px 8px 0 0;
  background: #383838;
}

.scene-panel {
  flex: 542 1 0;
}

.game-panel {
  flex: 870 1 0;
}

.hierarchy-panel {
  flex: 874 1 0;
}

.console-panel {
  flex: 538 1 0;
}

.tabs {
  display: flex;
  align-items: center;
  height: 38px;
  padding-right: 23px;
  background: #282828;
  box-shadow: inset 0 -2px #222;
}

.tab {
  gap: 8px;
  height: 38px;
  padding: 0 34px 0 12px;
  margin-right: auto;
}

.tab.current {
  border-radius: 6px 6px 0 0;
  background: #3c3c3c;
}

.tab-icon {
  width: 24px;
  height: 24px;
  color: #c4c4c4;
}

.wide-icon {
  width: 28px;
}

.game-tab {
  gap: 6px;
  padding-left: 10px;
}

.hierarchy-tab,
.inspector-tab {
  padding-left: 16px;
}

.project-tab {
  padding: 0 36px 0 16px;
  margin-right: 2px;
}

.tab.focused {
  box-sizing: border-box;
  padding-left: 14px;
  border-top: 4px solid #3a5f8f;
}

.tab-menu {
  margin-left: 20px;
}

.kebab {
  width: 6px;
  height: 22px;
  color: #c4c4c4;
}

.lock {
  width: 20px;
  height: 22px;
  color: #c4c4c4;
}

.toolbar {
  display: flex;
  align-items: center;
  height: 40px;
  border-bottom: 2px solid #232323;
  background: #3c3c3c;
  color: #c4c4c4;
}

.cell {
  box-sizing: border-box;
  height: 40px;
  border-right: 2px solid #232323;
}

.cell.on {
  background: #505050;
}

.fill {
  flex: 1;
}

.spacer {
  width: 12px;
}

.shading {
  width: 240px;
}

.toggle {
  justify-content: center;
  width: 52px;
}

.two-d {
  font-size: 22px;
  font-weight: 600;
  color: #a8a8a8;
}

.glyph {
  width: 28px;
  height: 28px;
}

.split {
  gap: 9px;
  width: 84px;
  padding-left: 10px;
}

.bar {
  width: 2px;
  height: 24px;
  background: #303030;
}

.hidden-count {
  gap: 4px;
  width: 68px;
  padding-left: 10px;
}

.camera {
  gap: 8px;
  width: 70px;
  padding-left: 9px;
}

.camera .glyph {
  height: 22px;
}

.gizmos {
  gap: 8px;
  padding: 0 8px 0 6px;
}

.gizmos.last {
  border-right: 0;
  padding-right: 10px;
}

.search {
  display: flex;
  flex: 1;
  align-items: center;
  gap: 8px;
  box-sizing: border-box;
  min-width: 0;
  height: 32px;
  padding: 0 8px;
  margin-right: 6px;
  border: 2px solid #202020;
  border-top-color: #0d0d0d;
  border-radius: 8px;
  background: #2a2a2a;
}

.scene-search {
  flex: 0 1 410px;
  margin-left: 14px;
}

.search input {
  flex: 1;
  min-width: 0;
  outline: none;
}

.search input::placeholder {
  color: #7b7b7b;
}

.search-icon {
  width: 20px;
  height: 20px;
}

/* Scene canvas */
.scene-view {
  display: grid;
  flex: 1;
  place-items: center;
  background:
    linear-gradient(to right, transparent 114px, #686868 114px 115px, transparent 115px) center / 231px 100%,
    linear-gradient(transparent 50%, #686868 50% calc(50% + 1px), transparent calc(50% + 1px)),
    linear-gradient(to right, transparent 11px, #474747 11px 12px, transparent 12px) center / 23px 100%,
    linear-gradient(transparent 11px, #474747 11px 12px, transparent 12px) center / 100% 23px,
    #464646;
}

.scene-view > * {
  grid-area: 1 / 1;
}

.camera-frame {
  width: 492px;
  height: 230px;
  border: 1px solid #b4b6b4;
}

.camera-gizmo {
  width: 20px;
  height: 16px;
}

/* Game view */
.display {
  width: 160px;
}

.aspect {
  width: 320px;
}

.scale {
  display: flex;
  align-items: center;
  gap: 12px;
  padding-left: 12px;
}

.scale input {
  width: 300px;
  height: 20px;
  appearance: none;
}

.scale input::-webkit-slider-runnable-track {
  height: 4px;
  background: #5e5e5e;
}

.scale input::-webkit-slider-thumb {
  width: 20px;
  height: 20px;
  margin-top: -8px;
  appearance: none;
  border-radius: 50%;
  background: #999;
}

.text {
  padding: 0 8px;
}

.game-view {
  flex: 1;
  background: #384c77;
}

/* Hierarchy */
.create {
  gap: 8px;
  padding: 0 24px 0 14px;
}

.plus {
  width: 24px;
  height: 24px;
}

.scene-row {
  display: flex;
  align-items: center;
  height: 30px;
  padding: 0 21px 0 68px;
  background: #4d4d4d;
}

.fold {
  width: 18px;
  height: 16px;
}

.unity-icon {
  width: 26px;
  height: 26px;
  margin: 0 10px 0 7px;
  color: #f0f0f0;
}

.scene-row strong {
  flex: 1;
  font-weight: 600;
}

.objects {
  flex: 1;
  padding: 0 0 0 56px;
  margin: 0;
  border-left: 64px solid #2d2d2d;
  box-shadow: inset 0 2px #2a2a2a;
  list-style: none;
}

.objects li {
  display: flex;
  align-items: center;
  gap: 8px;
  height: 32px;
}

.cube {
  width: 28px;
  height: 28px;
  color: #c4c4c4;
}

/* Console */
.console-bar {
  padding: 0 2px;
}

.clear {
  gap: 9px;
  padding: 0 8px 0 6px;
}

.console-bar .text {
  padding: 0 9px;
}

.count {
  gap: 6px;
  padding: 0 8px 0 10px;
}

.count:last-child {
  border-right: 0;
}

.count-icon {
  width: 28px;
  height: 28px;
}

.log {
  display: flex;
  flex: 318 1 0;
  align-items: flex-start;
  gap: 4px;
  padding: 8px 0 0 20px;
  box-sizing: border-box;
  white-space: nowrap;
}

.log-icon {
  width: 56px;
  height: 60px;
}

.log p {
  margin: -2px 0 0;
  line-height: 29px;
}

.log-detail {
  flex: 138 1 0;
  box-sizing: border-box;
  border: solid #232323;
  border-width: 2px 0;
}

/* Status bar */
.statusbar {
  display: flex;
  align-items: center;
  height: 40px;
  padding: 2px 0 0 3px;
}

.message {
  flex: 1;
  margin-left: 7px;
}

.statusbar button {
  box-sizing: border-box;
  justify-content: center;
  width: 52px;
  height: 38px;
  border-left: 2px solid #252525;
  color: #c4c4c4;
}

/* Dock */
.dock {
  display: flex;
  align-self: center;
  box-sizing: border-box;
  height: 98px;
  padding: 4px 4px 0;
  margin: 2px 0 10px;
  border: 2px solid #777983;
  border-radius: 30px;
  background: #595b69;
}

.dock-item {
  position: relative;
  flex-direction: column;
  width: 80px;
}

.dock-icon {
  width: 80px;
  height: 80px;
}

.running::after {
  width: 8px;
  height: 8px;
  border-radius: 50%;
  background: #000;
  content: "";
}

.app-label {
  position: absolute;
  right: 0;
  left: 0;
  text-align: center;
}

.month {
  top: 10px;
  font-size: 14px;
  font-weight: 700;
  line-height: 18px;
  color: #fff;
}

.day {
  top: 28px;
  font-size: 38px;
  font-weight: 300;
  line-height: 40px;
  color: #1c1c1c;
}

.tv-name {
  top: 24px;
  left: 37px;
  font-size: 26px;
  font-weight: 600;
  line-height: 32px;
  text-align: left;
  color: #fff;
}

.question {
  top: 0;
  font-size: 80px;
  font-weight: 200;
  line-height: 80px;
  color: #bdbec4;
}

.badge {
  position: absolute;
  top: 2px;
  right: 2px;
  width: 28px;
  height: 28px;
  border-radius: 50%;
  background: #e5493a;
  font-size: 16px;
  line-height: 28px;
  text-align: center;
  color: #fff;
}

.dock-divider {
  width: 2px;
  height: 70px;
  margin: 8px 17px 0;
  background: #3b3d4a;
}
</style>
